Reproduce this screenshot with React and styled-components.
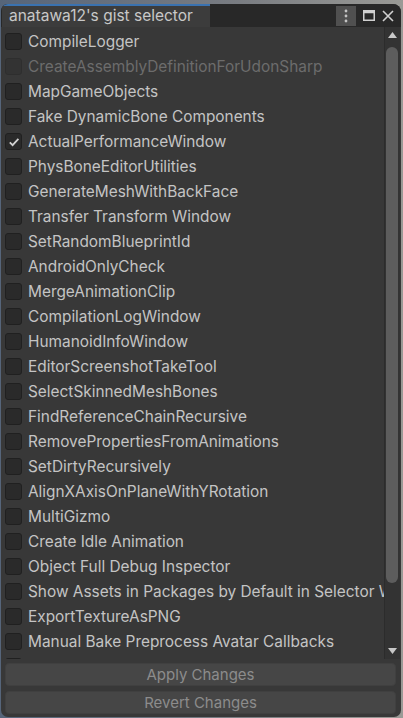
import React from "react";
import styled, { createGlobalStyle } from "styled-components";

const Global = createGlobalStyle`
  html, body { margin: 0; padding: 0; }
  body {
    width: 403px; height: 718px; overflow: hidden;
    background: linear-gradient(90deg, #56657a 0%, #7a7d82 60%, #9a9a96 100%);
    font-family: Inter, "Noto Sans", "Liberation Sans", sans-serif;
  }
`;

const Win = styled.div`
  position: relative;
  margin: 4px 2px 1px 1px;
  height: 713px;
  background: #383838;
  border-radius: 7px 8px 7px 7px;
  overflow: hidden;
  display: flex;
  flex-direction: column;
`;

const TitleBar = styled.div`
  height: 23px;
  flex: none;
  background: #282828;
  display: flex;
  align-items: stretch;
`;

const Tab = styled.div`
  width: 208px;
  margin-left: 1px;
  background: #3c3c3c;
  border-top: 2px solid #3a72b0;
  color: #c8c8c8;
  font-size: 15.5px;
  line-height: 20px;
  padding-left: 7px;
  box-sizing: border-box;
  white-space: nowrap;
`;

const TitleTools = styled.div`
  margin-left: auto;
  display: flex;
  align-items: center;
  gap: 6px;
  padding-right: 7px;
`;

const ToolBtn = styled.div`
  width: ${(p) => p.$w || 14}px;
  height: 20px;
  display: flex;
  align-items: center;
  justify-content: center;
  background: ${(p) => (p.$active ? "#505050" : "transparent")};
`;

const Body = styled.div`
  flex: 1;
  display: flex;
  min-height: 0;
`;

const List = styled.div`
  flex: 1;
  overflow: hidden;
  padding-top: 2px;
`;

const Row = styled.div`
  height: 25px;
  display: flex;
  align-items: center;
  gap: 6px;
  padding-left: 4px;
  white-space: nowrap;
  color: ${(p) => (p.$disabled ? "#6c6c6c" : "#c4c4c4")};
  font-size: 15.4px;
`;

const Box = styled.div`
  width: 15px;
  height: 15px;
  flex: none;
  border: 1px solid ${(p) => (p.$disabled ? "#2e2e2e" : "#202020")};
  background: ${(p) => (p.$disabled ? "#333333" : "#2a2a2a")};
  border-radius: 3px;
  display: flex;
  align-items: center;
  justify-content: center;
`;

const Scroll = styled.div`
  width: 15px;
  flex: none;
  margin-right: 1px;
  background: #333333;
  border-left: 1px solid #2c2c2c;
  display: flex;
  flex-direction: column;
  align-items: center;
`;

const Arrow = styled.div`
  height: 16px;
  flex: none;
  display: flex;
  align-items: center;
  justify-content: center;
`;

const Track = styled.div`
  flex: 1;
  width: 100%;
  padding: 4px 2px 0 1px;
  box-sizing: border-box;
`;

const Thumb = styled.div`
  height: 536px;
  background: #5d5d5d;
  border-radius: 6px;
`;

const Footer = styled.div`
  flex: none;
  display: flex;
  flex-direction: column;
  gap: 5px;
  padding: 4px 5px 3px 4px;
`;

const Button = styled.div`
  height: 23px;
  background: #464646;
  border: 1px solid #404040;
  border-radius: 4px;
  box-sizing: border-box;
  color: #8c8c8c;
  font-size: 15px;
  line-height: 21px;
  display: flex;
  align-items: center;
  justify-content: center;
`;

const items = [
  ["CompileLogger"],
  ["CreateAssemblyDefinitionForUdonSharp", "disabled"],
  ["MapGameObjects"],
  ["Fake DynamicBone Components"],
  ["ActualPerformanceWindow", "checked"],
  ["PhysBoneEditorUtilities"],
  ["GenerateMeshWithBackFace"],
  ["Transfer Transform Window"],
  ["SetRandomBlueprintId"],
  ["AndroidOnlyCheck"],
  ["MergeAnimationClip"],
  ["CompilationLogWindow"],
  ["HumanoidInfoWindow"],
  ["EditorScreenshotTakeTool"],
  ["SelectSkinnedMeshBones"],
  ["FindReferenceChainRecursive"],
  ["RemovePropertiesFromAnimations"],
  ["SetDirtyRecursively"],
  ["AlignXAxisOnPlaneWithYRotation"],
  ["MultiGizmo"],
  ["Create Idle Animation"],
  ["Object Full Debug Inspector"],
  ["Show Assets in Packages by Default in Selector Window"],
  ["ExportTextureAsPNG"],
  ["Manual Bake Preprocess Avatar Callbacks"],
  ["ReferenceFinder"],
];

const Check = () => (
  <svg width="12" height="12" viewBox="0 0 12 12">
    <path d="M1.8 6.4 L4.6 9.2 L10.4 2.8" fill="none" stroke="#d0d0d0" strokeWidth="1.8" />
  </svg>
);

export default function App() {
  return (
    <>
      <Global />
      <Win>
        <TitleBar>
          <Tab>anatawa12's gist selector</Tab>
          <TitleTools>
            <ToolBtn $active $w={20}>
              <svg width="4" height="14" viewBox="0 0 4 14">
                <circle cx="2" cy="2" r="1.4" fill="#c4c4c4" />
                <circle cx="2" cy="7" r="1.4" fill="#c4c4c4" />
                <circle cx="2" cy="12" r="1.4" fill="#c4c4c4" />
              </svg>
            </ToolBtn>
            <ToolBtn $w={13}>
              <svg width="12" height="11" viewBox="0 0 12 11">
                <rect x="0.75" y="0.75" width="10.5" height="9.5" fill="none" stroke="#d0d0d0" strokeWidth="1.5" />
                <rect x="0.75" y="0.75" width="10.5" height="2.5" fill="#d0d0d0" />
              </svg>
            </ToolBtn>
            <ToolBtn $w={13}>
              <svg width="12" height="12" viewBox="0 0 12 12">
                <path d="M1 1 L11 11 M11 1 L1 11" stroke="#d0d0d0" strokeWidth="1.6" />
              </svg>
            </ToolBtn>
          </TitleTools>
        </TitleBar>
        <Body>
          <List>
            {items.map(([name, flag]) => (
              <Row key={name} $disabled={flag === "disabled"}>
                <Box $disabled={flag === "disabled"}>{flag === "checked" && <Check />}</Box>
                {name}
              </Row>
            ))}
          </List>
          <Scroll>
            <Arrow>
              <svg width="9" height="6" viewBox="0 0 9 6">
                <path d="M0 6 L4.5 0 L9 6 Z" fill="#c8c8c8" />
              </svg>
            </Arrow>
            <Track>
              <Thumb />
            </Track>
            <Arrow>
              <svg width="9" height="6" viewBox="0 0 9 6">
                <path d="M0 0 L9 0 L4.5 6 Z" fill="#c8c8c8" />
              </svg>
            </Arrow>
          </Scroll>
        </Body>
        <Footer>
          <Button>Apply Changes</Button>
          <Button>Revert Changes</Button>
        </Footer>
      </Win>
    </>
  );
}
